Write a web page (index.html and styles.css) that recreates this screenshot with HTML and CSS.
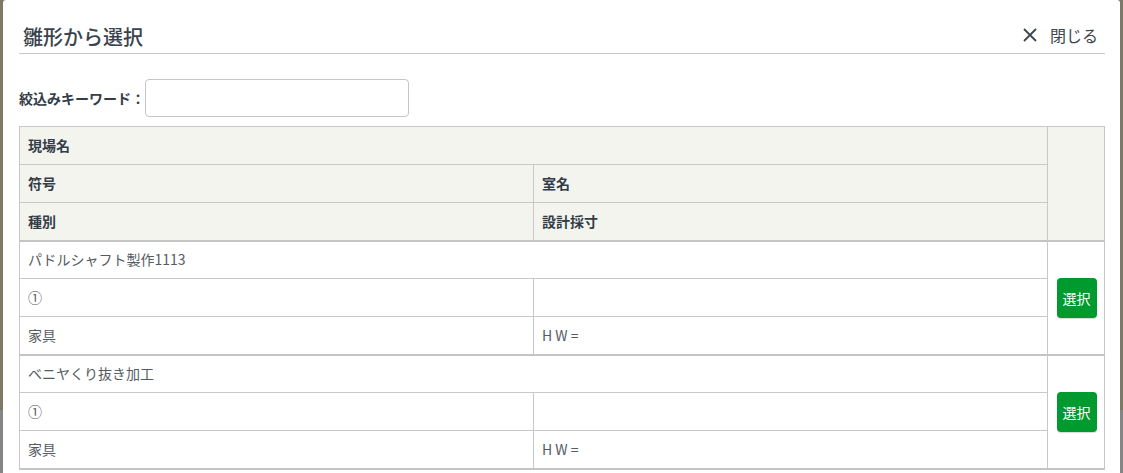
FILE: index.html
```html
<!DOCTYPE html>
<html lang="ja">
<head>
    <meta charset="UTF-8">
    <meta name="viewport" content="width=device-width, initial-scale=1.0">
    <title>雛形から選択</title>
    <link rel="stylesheet" href="styles.css">
</head>
<body>
<div class="overlay">
    <div class="modal">
        <div class="modal-header">
            <h2 class="modal-title">雛形から選択</h2>
            <button class="close-btn" type="button">
                <svg class="close-icon" width="16" height="16" viewBox="0 0 16 16">
                    <path d="M2 2 L14 14 M14 2 L2 14" stroke="#3d4650" stroke-width="1.8" fill="none"/>
                </svg>
                <span>閉じる</span>
            </button>
        </div>

        <div class="filter">
            <label class="filter-label" for="keyword">絞込みキーワード：</label>
            <input class="filter-input" id="keyword" type="text">
        </div>

        <table class="template-table">
            <thead>
                <tr>
                    <th colspan="2">現場名</th>
                    <th class="action-col" rowspan="3"></th>
                </tr>
                <tr>
                    <th class="half">符号</th>
                    <th class="half">室名</th>
                </tr>
                <tr>
                    <th>種別</th>
                    <th>設計採寸</th>
                </tr>
            </thead>
            <tbody>
                <tr>
                    <td colspan="2">パドルシャフト製作1113</td>
                    <td class="action-col" rowspan="3"><button class="select-btn" type="button">選択</button></td>
                </tr>
                <tr>
                    <td>①</td>
                    <td></td>
                </tr>
                <tr>
                    <td>家具</td>
                    <td>H W =</td>
                </tr>
            </tbody>
            <tbody>
                <tr>
                    <td colspan="2">ベニヤくり抜き加工</td>
                    <td class="action-col" rowspan="3"><button class="select-btn" type="button">選択</button></td>
                </tr>
                <tr>
                    <td>①</td>
                    <td></td>
                </tr>
                <tr>
                    <td>家具</td>
                    <td>H W =</td>
                </tr>
            </tbody>
        </table>
    </div>
</div>
</body>
</html>
```

FILE: styles.css
```css
html, body {
    margin: 0;
    height: 100%;
    overflow: hidden;
}

body {
    background: linear-gradient(to bottom, #7c7a67 0, #7c7a67 410px, #858585 410px);
    font-family: "Noto Sans CJK JP", sans-serif;
    color: #333d47;
}

.overlay {
    padding: 0 3px;
    height: 100%;
}

.modal {
    background-color: #fff;
    min-height: 100%;
    padding: 0 15px 0 16px;
    border-top-left-radius: 3px;
    border-top-right-radius: 3px;
}

.modal-header {
    display: flex;
    justify-content: space-between;
    align-items: center;
    padding-top: 21px;
    border-bottom: 1px solid #c8c8c8;
}

.modal-title {
    margin: 0;
    padding-left: 4px;
    font-size: 20px;
    font-weight: 500;
    line-height: 32px;
    color: #3a434d;
}

.close-btn {
    display: flex;
    align-items: center;
    gap: 12px;
    margin-bottom: 4px;
    padding: 0 7px 0 0;
    border: none;
    background: none;
    font-family: inherit;
    font-size: 16px;
    color: #3d4650;
    cursor: pointer;
}

.filter {
    display: flex;
    align-items: center;
    margin-top: 25px;
}

.filter-label {
    font-size: 14px;
    font-weight: bold;
    color: #333d47;
}

.filter-input {
    width: 264px;
    height: 38px;
    box-sizing: border-box;
    border: 1px solid #c6c6c6;
    border-radius: 4px;
    font-size: 14px;
}

.template-table {
    width: 100%;
    margin-top: 9px;
    border-collapse: collapse;
    font-size: 14px;
}

.template-table th,
.template-table td {
    height: 38px;
    padding: 0 8px;
    border: 1px solid #c8c8c8;
    text-align: left;
    box-sizing: border-box;
    line-height: 21px;
}

.template-table th {
    background-color: #f4f4ef;
    font-weight: bold;
    color: #333d47;
}

.template-table td {
    color: #555b62;
}

.template-table th.half {
    width: 515px;
}

.template-table tbody {
    border-top: 2px solid #c4c4c4;
    border-bottom: 2px solid #c4c4c4;
}

.action-col {
    width: 57px;
    text-align: center !important;
    padding: 0 !important;
}

.select-btn {
    width: 40px;
    height: 40px;
    margin-left: 1px;
    border: none;
    border-radius: 4px;
    background-color: #009a2e;
    color: #fff;
    font-family: inherit;
    font-size: 14px;
    cursor: pointer;
    box-shadow: 0 1px 1px rgba(0,0,0,0.15);
}

.select-btn:hover {
    background-color: #008527;
}
```
